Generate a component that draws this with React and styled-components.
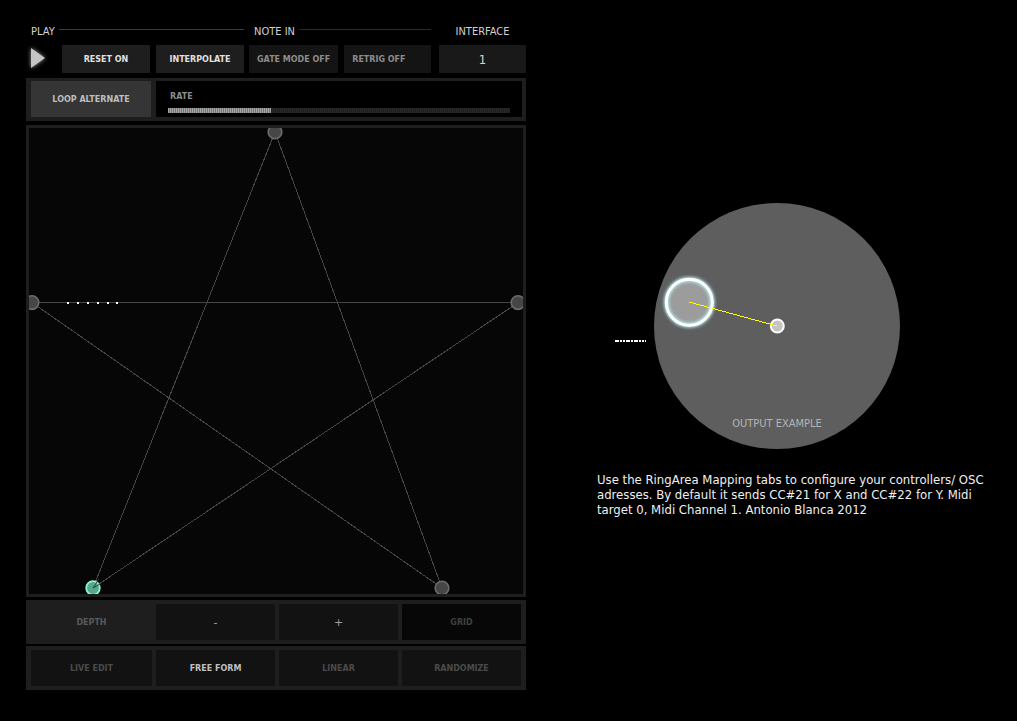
import React, { useState } from "react";
import styled, { createGlobalStyle, css } from "styled-components";

const PATH_POINTS = [
    { id: "top", x: 246, y: 4 },
    { id: "right", x: 489, y: 174.6 },
    { id: "bottomRight", x: 413, y: 460 },
    { id: "bottomLeft", x: 64, y: 460, active: true },
    { id: "left", x: 3, y: 174.6 },
];

const EDGES = [
    [0, 3],
    [0, 2],
    [4, 1],
    [4, 2],
    [1, 3],
];

const TRAIL = [38, 48, 58, 68, 78, 87];

const App = () => {
    const [rate, setRate] = useState(30);
    const [playing, setPlaying] = useState(false);

    return (
        <>
            <GlobalStyle />
            <Page>
                <Sequencer>
                    <Toolbar>
                        <Group>
                            <GroupHeader>
                                <span>PLAY</span>
                                <Rule />
                            </GroupHeader>
                            <ButtonRow>
                                <PlayButton aria-label="Play" aria-pressed={playing} onClick={() => setPlaying(!playing)}>
                                    <svg width="28" height="28" viewBox="0 0 28 28" aria-hidden="true">
                                        <path d="M5 3 L19 13 L5 23 Z" fill="#c4c4c4" />
                                    </svg>
                                </PlayButton>
                                <ToolButton $lit>RESET ON</ToolButton>
                                <ToolButton $lit>INTERPOLATE</ToolButton>
                            </ButtonRow>
                        </Group>
                        <Group>
                            <GroupHeader>
                                <span>NOTE IN</span>
                                <Rule $dim />
                            </GroupHeader>
                            <ButtonRow>
                                <ToolButton $left>GATE MODE OFF</ToolButton>
                                <ToolButton $left>RETRIG OFF</ToolButton>
                            </ButtonRow>
                        </Group>
                        <InterfaceGroup>
                            <InterfaceLabel htmlFor="interface">INTERFACE</InterfaceLabel>
                            <InterfaceInput id="interface" type="text" defaultValue="1" />
                        </InterfaceGroup>
                    </Toolbar>

                    <LoopPanel>
                        <LoopButton>LOOP ALTERNATE</LoopButton>
                        <RateBox>
                            <label htmlFor="rate">RATE</label>
                            <RateSlider
                                id="rate"
                                type="range"
                                min="0"
                                max="100"
                                value={rate}
                                onChange={(e) => setRate(Number(e.target.value))}
                                style={{ "--fill": `${rate}%` }}
                            />
                        </RateBox>
                    </LoopPanel>

                    <PathArea>
                        <svg viewBox="0 0 494 466" role="img" aria-label="Path editor">
                            <g stroke="#464646" strokeWidth="1" shapeRendering="crispEdges">
                                {EDGES.map(([a, b]) => (
                                    <line
                                        key={`${a}-${b}`}
                                        x1={PATH_POINTS[a].x}
                                        y1={PATH_POINTS[a].y}
                                        x2={PATH_POINTS[b].x}
                                        y2={PATH_POINTS[b].y}
                                    />
                                ))}
                            </g>
                            {PATH_POINTS.map((p) => (
                                <circle
                                    key={p.id}
                                    cx={p.x}
                                    cy={p.y}
                                    r="6.8"
                                    fill={p.active ? "#56a98c" : "#464646"}
                                    stroke={p.active ? "#8cf5d2" : "#6c6c6c"}
                                    strokeWidth={p.active ? 1.8 : 1.6}
                                />
                            ))}
                            <path d="M64 460 L70 451 M64 460 L71 456" stroke="#23443a" strokeWidth="1" />
                            {TRAIL.map((x) => (
                                <rect key={x} x={x} y="174" width="2" height="2" fill="#fff" />
                            ))}
                        </svg>
                    </PathArea>

                    <Pads>
                        <PadPanel>
                            <PadLabel>DEPTH</PadLabel>
                            <Pad $sign>-</Pad>
                            <Pad $sign>+</Pad>
                            <Pad $dark>GRID</Pad>
                        </PadPanel>
                        <PadPanel>
                            <Pad>LIVE EDIT</Pad>
                            <Pad $lit>FREE FORM</Pad>
                            <Pad>LINEAR</Pad>
                            <Pad>RANDOMIZE</Pad>
                        </PadPanel>
                    </Pads>
                </Sequencer>

                <Output>
                    <svg viewBox="0 0 380 248" role="img" aria-label="Output example">
                        <defs>
                            <filter id="halo" x="-50%" y="-50%" width="200%" height="200%">
                                <feGaussianBlur stdDeviation="1.6" />
                            </filter>
                        </defs>
                        <circle cx="180" cy="124" r="123" fill="#5e5e5e" />
                        <path d="M18 139h31" stroke="#fff" strokeWidth="2" strokeDasharray="4 1 2 1 2 1 4 1 2 1 4 1 2 1 2 1 2" />
                        <circle cx="92.3" cy="100.3" r="23" fill="#9c9c9c" stroke="#b4e6ea" strokeWidth="5" filter="url(#halo)" />
                        <circle cx="92.3" cy="100.3" r="23" fill="none" stroke="#fff" strokeWidth="3" />
                        <circle cx="180.3" cy="124" r="6.5" fill="#c4c4c4" stroke="#fff" strokeWidth="2" />
                        <path d="M92 100 L180 124" stroke="#ffff00" strokeWidth="1" shapeRendering="crispEdges" />
                        <OutputTitle x="180" y="225" textAnchor="middle">
                            OUTPUT EXAMPLE
                        </OutputTitle>
                    </svg>
                    <Help>
                        Use the RingArea Mapping tabs to configure your controllers/ OSC adresses. By default it sends CC#21 for X
                        and CC#22 for Y. Midi target 0, Midi Channel 1. Antonio Blanca 2012
                    </Help>
                </Output>
            </Page>
        </>
    );
};

// Styled Components
const GlobalStyle = createGlobalStyle`
    * {
        box-sizing: border-box;
    }

    body {
        margin: 0;
        background-color: #000;
        color: #d2d2d2;
        font-family: "DejaVu Sans Condensed", "DejaVu Sans", sans-serif;
        font-size: 11px;
    }

    button,
    input {
        margin: 0;
        border: none;
        border-radius: 0;
        font-family: inherit;
    }
`;

const smallCaps = css`
    font-family: "DejaVu Sans", sans-serif;
    font-size: 8px;
    font-weight: bold;
    white-space: nowrap;
`;

const Page = styled.main`
    display: grid;
    grid-template-columns: minmax(0, 500fr) minmax(0, 380fr);
    column-gap: 71px;
    align-items: start;
    min-height: 100vh;
    padding: 25px 40px 24px 26px;
`;

const Sequencer = styled.section`
    display: flex;
    flex-direction: column;
    gap: 4px;
`;

const Toolbar = styled.div`
    display: grid;
    grid-template-columns: 218fr 182fr 90fr;
    column-gap: 5px;
`;

const Group = styled.div`
    display: flex;
    flex-direction: column;
    gap: 6px;
`;

const GroupHeader = styled.div`
    display: flex;
    align-items: center;
    gap: 4px;
    padding-left: 5px;
    line-height: 14px;
`;

const Rule = styled.div`
    flex: 1;
    height: 1px;
    margin-bottom: 5px;
    background-color: ${({ $dim }) => ($dim ? "#2a2a2a" : "#3c3c3c")};
`;

const ButtonRow = styled.div`
    display: flex;
    gap: 6px;
`;

const PlayButton = styled.button`
    flex: 0 0 30px;
    height: 28px;
    padding: 0;
    background: none;

    svg {
        display: block;
        filter: drop-shadow(0 0 2px #999);
    }
`;

const ToolButton = styled.button`
    flex: 1;
    height: 28px;
    padding: 0 8px;
    background-color: ${({ $lit }) => ($lit ? "#1e1e1e" : "#141414")};
    color: ${({ $lit }) => ($lit ? "#e0e0e0" : "#8c8c8c")};
    text-align: ${({ $left }) => ($left ? "left" : "center")};
    ${smallCaps}
`;

const InterfaceGroup = styled(Group)`
    padding-left: 3px;
`;

const InterfaceLabel = styled.label`
    line-height: 14px;
    text-align: center;
`;

const InterfaceInput = styled.input`
    width: 100%;
    height: 28px;
    padding: 0;
    background-color: #191919;
    color: #d2d2d2;
    font-size: 13px;
    text-align: center;
`;

const LoopPanel = styled.div`
    display: grid;
    grid-template-columns: 120fr 366fr;
    column-gap: 5px;
    margin-top: 1px;
    padding: 3px 4px 4px 5px;
    background-color: #1e1e1e;
`;

const LoopButton = styled.button`
    height: 36px;
    background-color: #353535;
    color: #bebebe;
    ${smallCaps}
`;

const RateBox = styled.div`
    display: flex;
    flex-direction: column;
    justify-content: space-between;
    padding: 11px 12px 4px;
    background-color: #000;

    label {
        padding-left: 2px;
        color: #8c8c8c;
        line-height: 10px;
        ${smallCaps}
    }
`;

const RateSlider = styled.input`
    appearance: none;
    display: block;
    width: 100%;
    height: 5px;
    background-color: #2a2a2a;
    background-image: repeating-linear-gradient(90deg, transparent 0 1px, rgba(0, 0, 0, 0.3) 1px 2px),
        linear-gradient(90deg, #a8a8a8 var(--fill), transparent var(--fill));

    &::-webkit-slider-thumb {
        appearance: none;
        width: 1px;
        height: 5px;
    }
`;

const PathArea = styled.div`
    border: 3px solid #1e1e1e;
    background-color: #060606;

    svg {
        display: block;
        width: 100%;
    }
`;

const Pads = styled.div`
    display: flex;
    flex-direction: column;
    gap: 2px;
    margin-top: -1px;
`;

const PadPanel = styled.div`
    display: grid;
    grid-template-columns: 121fr 119fr 119fr 119fr;
    column-gap: 4px;
    padding: 4px 5px;
    background-color: #1e1e1e;
`;

const padColor = ({ $lit, $sign, $dark }) => {
    if ($lit) return "#c0c0c0";
    if ($sign) return "#a0a0a0";
    return $dark ? "#404040" : "#4a4a4a";
};

const Pad = styled.button`
    height: 36px;
    padding: 0;
    background-color: ${({ $dark }) => ($dark ? "#070707" : "#121212")};
    color: ${padColor};
    ${smallCaps}
    ${({ $sign }) =>
        $sign &&
        css`
            font-size: 11px;
            font-weight: normal;
        `}
`;

const PadLabel = styled.div`
    display: flex;
    align-items: center;
    justify-content: center;
    height: 36px;
    color: #5a5a5a;
    ${smallCaps}
`;

const Output = styled.section`
    padding-top: 177px;

    svg {
        display: block;
        width: 100%;
    }
`;

const OutputTitle = styled.text`
    fill: #b4b4b4;
    font-size: 11px;
`;

const Help = styled.p`
    margin: 22px -16px 0 0;
    color: #f0f0f0;
    font-size: 13px;
    line-height: 15px;
`;

export default App;
